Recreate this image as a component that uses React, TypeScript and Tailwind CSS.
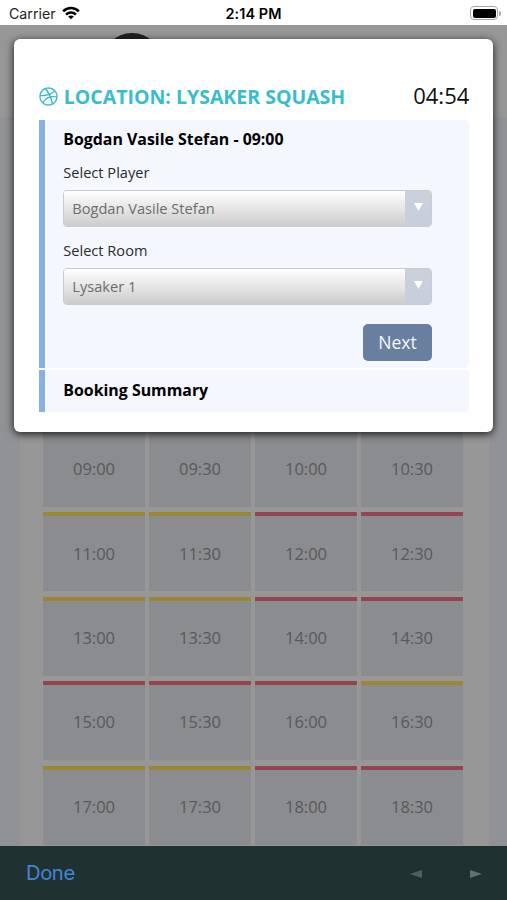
import { FaDribbble } from 'react-icons/fa';

type Slot = { time: string; state: 'partial' | 'full' };

const slots: Slot[] = [
  { time: '09:00', state: 'partial' },
  { time: '09:30', state: 'partial' },
  { time: '10:00', state: 'full' },
  { time: '10:30', state: 'full' },
  { time: '11:00', state: 'partial' },
  { time: '11:30', state: 'partial' },
  { time: '12:00', state: 'full' },
  { time: '12:30', state: 'full' },
  { time: '13:00', state: 'partial' },
  { time: '13:30', state: 'partial' },
  { time: '14:00', state: 'full' },
  { time: '14:30', state: 'full' },
  { time: '15:00', state: 'full' },
  { time: '15:30', state: 'full' },
  { time: '16:00', state: 'full' },
  { time: '16:30', state: 'partial' },
  { time: '17:00', state: 'partial' },
  { time: '17:30', state: 'partial' },
  { time: '18:00', state: 'full' },
  { time: '18:30', state: 'full' },
];

function StatusBar() {
  return (
    <header className="grid h-[25px] shrink-0 grid-cols-3 items-center bg-white pt-[3px] font-['Inter',sans-serif] text-black">
      <div className="flex items-center gap-[6px] pl-[9px]">
        <span className="text-[14.2px] leading-none text-[#222]">Carrier</span>
        <svg className="mb-[3px] h-[14px] w-[18px]" viewBox="0 0 19 14" fill="none" stroke="#000" strokeWidth="2.7">
          <path d="M1.2 5.2C6 .5 13 .5 17.8 5.2" />
          <path d="M4.3 8.7c3-2.9 7.4-2.9 10.4 0" />
          <path d="M9.5 13.7 6.5 10.8c1.8-1.5 4.2-1.5 6 0Z" fill="#000" stroke="none" />
        </svg>
      </div>
      <div className="text-center text-[14.4px] leading-none font-semibold tracking-[0.1px]">2:14 PM</div>
      <div className="flex items-center justify-end gap-px pr-[6px] pb-[2px]">
        <span className="h-[14px] w-[28px] rounded-[4px] border border-[#a5a5a5] p-[1.5px]">
          <span className="block h-full rounded-[2px] bg-black" />
        </span>
        <span className="h-[5px] w-[2px] rounded-r-full bg-[#a5a5a5]" />
      </div>
    </header>
  );
}

function SlotCell({ slot }: { slot: Slot }) {
  return (
    <div
      className={`flex h-[79px] items-center justify-center border-t-4 bg-[#8b8c90] text-[16.5px] text-[#58595c] ${
        slot.state === 'full' ? 'border-[#944550]' : 'border-[#9a8734]'
      }`}
    >
      {slot.time}
    </div>
  );
}

function SelectField({ label, value }: { label: string; value: string }) {
  return (
    <div>
      <div className="h-[28px] text-[14.6px] leading-[20px] text-[#2b2b2b]">{label}</div>
      <div className="flex h-[37px] overflow-hidden rounded-[4px] border border-[#c9cbd2]">
        <div className="flex flex-1 items-center bg-linear-to-b from-white to-[#cccccc] pt-[2px] pl-[8px] text-[14.6px] text-[#6d6d6d]">
          {value}
        </div>
        <div className="flex w-[26px] items-center justify-center bg-linear-to-b from-[#cbd0dc] to-[#c8cddd] pb-[2px]">
          <svg className="h-[8px] w-[9px]" viewBox="0 0 9 8">
            <path d="M0 0h9L4.5 8Z" fill="#fff" />
          </svg>
        </div>
      </div>
    </div>
  );
}

function BookingDialog() {
  return (
    <section className="absolute top-[38.5px] left-[14.3px] h-[393.5px] w-[479px] rounded-[6px] bg-white pt-[43px] pr-[24px] pl-[24.5px] shadow-[0_2px_9px_rgba(0,0,0,0.85)]">
      <div className="flex h-[38px] items-start">
        <FaDribbble className="mt-[5px] size-[19px] shrink-0 text-[#3cbac8]" />
        <h1 className="ml-[6px] flex-1 text-[19.5px] leading-[29px] font-bold whitespace-nowrap text-[#37bdcb]">
          LOCATION: LYSAKER SQUASH
        </h1>
        <span className="text-[22px] leading-[27px] text-[#111]">04:54</span>
      </div>
      <div className="h-[248px] rounded-r-[4px] border-l-[6px] border-[#89b0e6] bg-[#f4f7fe] pt-[8px] pr-[37px] pl-[18.5px]">
        <h2 className="mb-[12px] text-[15.9px] leading-[22px] font-bold text-black">Bogdan Vasile Stefan - 09:00</h2>
        <div className="flex flex-col gap-[13px]">
          <SelectField label="Select Player" value="Bogdan Vasile Stefan" />
          <SelectField label="Select Room" value="Lysaker 1" />
        </div>
        <div className="mt-[19.5px] flex justify-end">
          <button className="h-[37px] w-[69.5px] rounded-[5px] bg-[#687f9f] pt-px text-[17.6px] leading-none text-[#f4f7fe]">Next</button>
        </div>
      </div>
      <div className="mt-[2.5px] h-[41.5px] rounded-r-[4px] border-l-[6px] border-[#89b0e6] bg-[#f4f7fe] pl-[18.5px]">
        <h2 className="text-[15.9px] leading-[40px] font-bold text-black">Booking Summary</h2>
      </div>
    </section>
  );
}

function BottomBar() {
  return (
    <footer className="flex h-[54px] shrink-0 items-center bg-[#203131] pr-[25px] pl-[26px]">
      <span className="flex-1 pt-px font-['Inter',sans-serif] text-[20.2px] tracking-[-0.4px] text-[#4486d6]">Done</span>
      <svg className="mt-[2px] h-[8px] w-[12px]" viewBox="0 0 12 8">
        <path d="M12 0v8L0 4Z" fill="#50605f" />
      </svg>
      <svg className="mt-[2px] ml-[48px] h-[8px] w-[12px]" viewBox="0 0 12 8">
        <path d="M0 0v8l12-4Z" fill="#61716e" />
      </svg>
    </footer>
  );
}

export default function App() {
  return (
    <div className="relative flex h-[900px] w-[507px] flex-col overflow-hidden bg-[#919296] font-['Open_Sans',sans-serif]">
      <StatusBar />
      <main className="flex min-h-0 flex-1 flex-col overflow-hidden">
        <div className="h-[92px] shrink-0 overflow-hidden bg-[#979797] pt-[8px] pl-[102px]">
          <div className="size-[60px] rounded-full bg-[#222]" />
        </div>
        <div className="mr-[18.5px] ml-[20px] flex-1 bg-[#979797] pt-[311px] pr-[25.5px] pl-[23px]">
          <div className="grid grid-cols-4 gap-x-[4px] gap-y-[5.4px]">
            {slots.map((slot) => (
              <SlotCell key={slot.time} slot={slot} />
            ))}
          </div>
        </div>
      </main>
      <BottomBar />
      <BookingDialog />
    </div>
  );
}
